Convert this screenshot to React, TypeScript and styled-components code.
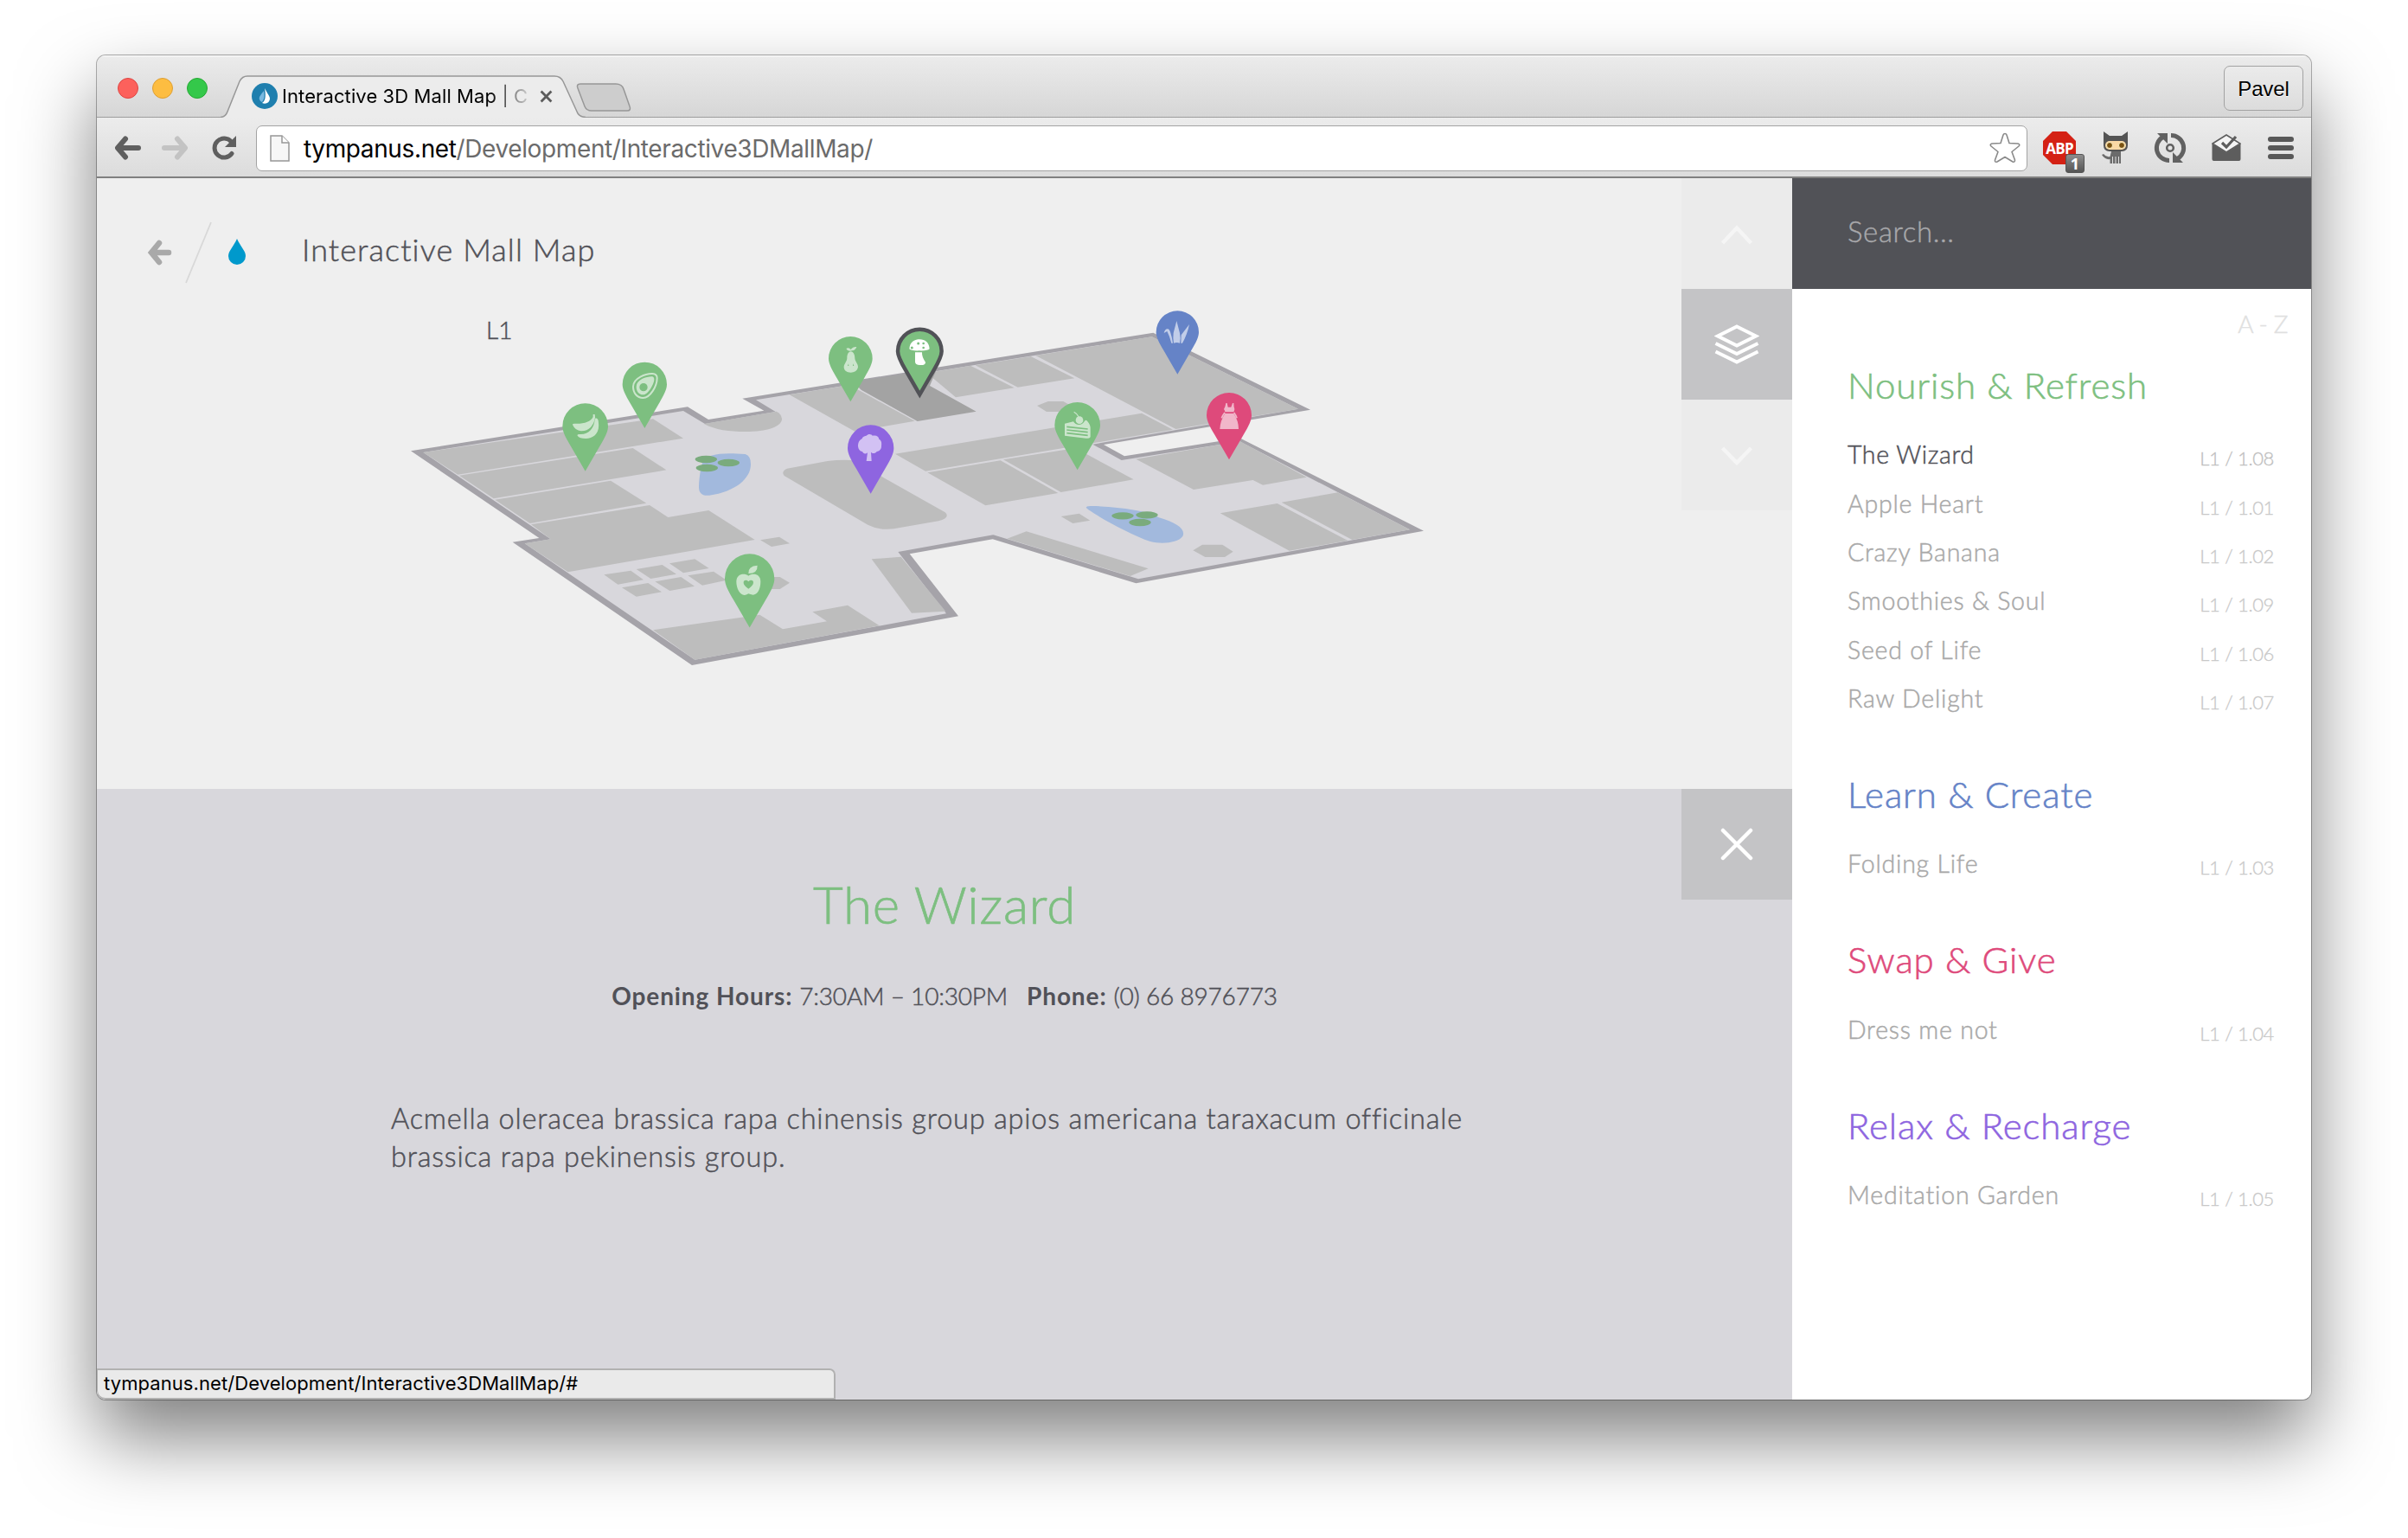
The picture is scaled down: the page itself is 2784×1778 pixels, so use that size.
import React from "react";
import styled, { createGlobalStyle } from "styled-components";

const SANS = `Lato, "Liberation Sans", sans-serif`;
const UI = `Inter, Roboto, "Liberation Sans", sans-serif`;

const colors = {
  ink: "#515158",
  green: "#7dbf80",
  blue: "#6583c7",
  pink: "#de4a7b",
  purple: "#8e65e0",
  room: "#bdbdbd",
  floor: "#d8d7dc",
  wall: "#a5a3a9",
};

const GlobalStyle = createGlobalStyle`
  *, *::before, *::after { box-sizing: border-box; }
  html, body { margin: 0; background: #fff; }
  body { font-family: ${SANS}; font-weight: 300; color: ${colors.ink}; overflow: hidden; }
  h1, h2, h3, p, ul { margin: 0; padding: 0; font-weight: 300; list-style: none; }
  svg { display: block; flex: none; }
`;

const Desktop = styled.div`
  width: 2784px;
  height: 1778px;
  padding: 64px 112px 160px;
  overflow: hidden;
`;

const Window = styled.div`
  width: 2560px;
  height: 1554px;
  display: flex;
  flex-direction: column;
  border-radius: 10px;
  overflow: hidden;
  background: #efefef;
  box-shadow: 0 0 0 1px rgba(0, 0, 0, 0.3), 0 44px 88px rgba(0, 0, 0, 0.5);
`;

/* ---------- browser chrome ---------- */

const TitleBar = styled.div`
  height: 72px;
  flex: none;
  display: flex;
  align-items: flex-end;
  background: linear-gradient(#ebebeb, #d6d6d6);
  border-top: 2px solid #f3f3f3;
  box-shadow: inset 0 -1px 0 #9d9d9d;
`;

const Lights = styled.div`
  width: 143px;
  height: 70px;
  padding: 2px 0 0 24px;
  display: flex;
  align-items: center;
  gap: 16px;
`;

const Light = styled.span<{ $fill: string; $edge: string }>`
  width: 24px;
  height: 24px;
  border-radius: 50%;
  background: ${(p) => p.$fill};
  border: 1px solid ${(p) => p.$edge};
`;

const Tab = styled.div`
  position: relative;
  width: 424px;
  height: 49px;
  display: flex;
  align-items: center;
  padding: 0 0 1px 36px;
`;

const TabShape = styled.svg`
  position: absolute;
  left: 0;
  top: 0;
`;

const TabTitle = styled.span`
  position: relative;
  width: 292px;
  margin: 0 6px 0 5px;
  white-space: nowrap;
  font: 400 22px/30px ${UI};
  letter-spacing: 0.1px;
  color: #000;
  -webkit-mask-image: linear-gradient(90deg, #000 82%, rgba(0, 0, 0, 0.1) 98%);
  mask-image: linear-gradient(90deg, #000 82%, rgba(0, 0, 0, 0.1) 98%);
`;

const Overlay = styled.span`
  position: relative;
  display: flex;
`;

const NewTab = styled.svg`
  margin: 0 0 7px -13px;
`;

const ProfileButton = styled.button`
  width: 92px;
  height: 52px;
  margin: 0 9px 8px auto;
  padding: 2px 0 0;
  border: 1.5px solid #a2a2a2;
  border-radius: 7px;
  background: linear-gradient(#ebebeb, #dcdcdc);
  font: 400 24px/48px "Liberation Sans", Arial, sans-serif;
  letter-spacing: -0.1px;
  color: #000;
  text-shadow: 0 1px 0 #fff;
`;

const Toolbar = styled.div`
  height: 70px;
  flex: none;
  display: flex;
  align-items: center;
  padding: 2px 8px 0 20px;
  background: linear-gradient(#ececec, #dcdcdc);
  border-bottom: 2px solid #808080;
`;

const NavIcons = styled.div`
  display: flex;
  align-items: center;
  flex: none;
  width: 164px;
  gap: 24px;
  svg:last-child { margin-left: 3px; }
`;

const Omnibox = styled.div`
  width: 2048px;
  flex: none;
  height: 53px;
  display: flex;
  align-items: center;
  padding: 0 7px 0 15px;
  border: 1.5px solid #a3a3a3;
  border-radius: 7px;
  background: #fff;
`;

const Url = styled.span`
  flex: 1;
  margin-left: 16px;
  padding-top: 2px;
  font: 400 28px/40px ${UI};
  letter-spacing: -0.38px;
  color: #6b6b6b;
  b { font-weight: 400; color: #000; }
`;

const Extensions = styled.div`
  display: flex;
  flex: none;
  align-items: center;
  gap: 23.6px;
  margin-left: 14px;
`;

const AbpIcon = styled.span`
  position: relative;
  width: 48px;
  height: 50px;
  padding: 6px 0 0 4px;
`;

const AbpLabel = styled.span`
  display: block;
  width: 38px;
  height: 38px;
  background: #d42114;
  clip-path: polygon(29% 0, 71% 0, 100% 29%, 100% 71%, 71% 100%, 29% 100%, 0 71%, 0 29%);
  color: #fff;
  text-align: center;
  font: 700 17px/40px "Open Sans", "Liberation Sans", sans-serif;
  letter-spacing: -0.7px;
`;

const AbpBadge = styled.span`
  position: absolute;
  left: 30px;
  top: 32px;
  width: 22px;
  height: 22px;
  border-radius: 3px;
  background: linear-gradient(#8d8d8d, #555);
  border: 1px solid #555;
  color: #fff;
  text-align: center;
  font: 700 18px/21px "Open Sans", "Liberation Sans", sans-serif;
`;

/* ---------- page ---------- */

const Page = styled.div`
  flex: 1;
  display: flex;
  min-height: 0;
`;

const Main = styled.main`
  width: 1960px;
  display: flex;
  flex-direction: column;
`;

const MapSection = styled.section`
  height: 706px;
  display: flex;
  background: #efefef;
`;

const MapColumn = styled.div`
  width: 1832px;
  padding-top: 50px;
`;

const PageHeader = styled.header`
  display: flex;
  align-items: center;
  height: 72px;
  padding-left: 58px;
`;

const PageTitle = styled.h1`
  margin-left: 64px;
  font-size: 36px;
  line-height: 72px;
  height: 80px;
  letter-spacing: 1.1px;
  -webkit-text-stroke: 0.5px currentColor;
`;

const MapStage = styled.div`
  position: relative;
  margin: 12px 0 0 338px;
`;

const LevelLabel = styled.span`
  position: absolute;
  left: 112px;
  top: 21px;
  font-size: 28px;
  line-height: 40px;
  -webkit-text-stroke: 0.5px currentColor;
`;

const LevelNav = styled.nav`
  display: flex;
  flex-direction: column;
`;

const SquareButton = styled.button<{ $muted?: boolean }>`
  width: 128px;
  height: 128px;
  flex: none;
  padding: 0;
  border: 0;
  display: flex;
  align-items: center;
  justify-content: center;
  background: ${(p) => (p.$muted ? "#ebebeb" : "#c4c4c6")};
`;

const Detail = styled.section`
  position: relative;
  flex: 1;
  padding-top: 93px;
  background: ${colors.floor};
`;

const CloseSlot = styled.div`
  position: absolute;
  right: 0;
  top: 0;
`;

const DetailTitle = styled.h2`
  text-align: center;
  font-size: 60px;
  line-height: 80px;
  letter-spacing: 0.8px;
  color: ${colors.green};
  -webkit-text-stroke: 0.7px currentColor;
`;

const Facts = styled.p`
  margin-top: 46px;
  display: flex;
  justify-content: center;
  gap: 8px;
  font-size: 28px;
  line-height: 40px;
  letter-spacing: -0.2px;
  span { -webkit-text-stroke: 0.5px currentColor; }
`;

const FactName = styled.b<{ $gap?: boolean }>`
  font-weight: 700;
  letter-spacing: 0.9px;
  margin-left: ${(p) => (p.$gap ? 14 : 0)}px;
`;

const Description = styled.p`
  width: 1300px;
  margin: 100px 0 0 340px;
  font-size: 32.5px;
  line-height: 44px;
  letter-spacing: 0.8px;
  -webkit-text-stroke: 0.5px currentColor;
`;

const StatusBar = styled.div`
  position: absolute;
  left: 0;
  bottom: 0;
  width: 854px;
  height: 36px;
  padding-left: 7px;
  border: 2px solid #b1b1b1;
  border-left-width: 1px;
  border-radius: 0 7px 0 10px;
  background: #eaeaea;
  font: 400 22px/31px ${UI};
  letter-spacing: 0.08px;
  color: #000;
`;

/* ---------- sidebar ---------- */

const Sidebar = styled.aside`
  width: 600px;
  background: #fff;
`;

const SearchBox = styled.div`
  height: 128px;
  padding-left: 64px;
  background: #515257;
  color: #a8a8ab;
  font-size: 33px;
  line-height: 123px;
  letter-spacing: 0.6px;
  -webkit-text-stroke: 0.4px currentColor;
`;

const SortToggle = styled.div`
  padding: 25px 27px 26px 0;
  text-align: right;
  font-size: 28px;
  line-height: 30px;
  letter-spacing: -0.4px;
  color: #e0e0e0;
  -webkit-text-stroke: 0.4px currentColor;
`;

const Group = styled.section`
  margin-bottom: 52.8px;
`;

const GroupTitle = styled.h3<{ $color: string }>`
  padding-left: 64px;
  margin-bottom: 22px;
  font-size: 42px;
  line-height: 60px;
  letter-spacing: 0.9px;
  color: ${(p) => p.$color};
  -webkit-text-stroke: 0.6px currentColor;
`;

const Shop = styled.li<{ $active?: boolean }>`
  height: 56.4px;
  padding: 0 43px 0 64px;
  display: flex;
  justify-content: space-between;
  align-items: center;
  font-size: 28.5px;
  letter-spacing: ${(p) => (p.$active ? 0.6 : 0.8)}px;
  color: ${(p) => (p.$active ? colors.ink : "#a9a9a9")};
  -webkit-text-stroke: 0.5px currentColor;
`;

const ShopPlace = styled.span<{ $active?: boolean }>`
  padding-top: 9px;
  font-size: 22px;
  letter-spacing: -0.35px;
  color: ${(p) => (p.$active ? "#bebebe" : "#c8c8c8")};
  -webkit-text-stroke: 0.3px currentColor;
`;

/* ---------- map ---------- */

const rooms = [
  "118,549 915,433 1020,500 238,626",
  "243,629 845,534 961,610 362,709",
  "367,713 768,647 892,725 488,795",
  "492,799 903,732 967,774 1108,750 1268,852 620,964 470,865 560,850",
  "745,973 838,959 882,991 793,1007",
  "857,954 947,939 996,971 907,987",
  "972,934 1060,919 1109,951 1020,967",
  "807,1018 898,1002 945,1033 857,1049",
  "922,997 1012,981 1059,1013 973,1029",
  "1036,976 1125,962 1170,992 1086,1010",
  "915,1165 1285,1112 1365,1162 1518,1135 1468,1102 1590,1079 1700,1150 1060,1268",
  "1300,981 1355,981 1389,1001 1355,1023 1300,1023",
  "1287,853 1353,842 1389,865 1326,876",
  "1673,919 1775,911 1930,1100 1812,1106",
  "1388,349 1595,316 1630,334 1823,440 1615,476",
  "1865,274 2016,248 2168,325 1965,358",
  "2033,247 2225,216 2377,292 2180,323",
  "2242,213 2645,148 3153,398 2728,468 2390,290",
  "1755,554 2610,413 2718,470 2445,516 1860,614",
  "1867,619 2120,577 2320,690 2068,733",
  "2130,574 2380,534 2582,643 2330,687",
  "2247,387 2285,372 2338,372 2370,390 2335,408 2280,408",
  "2590,572 2950,510 3182,635 3030,662 2996,645 2790,678",
  "2882,760 3080,726 3325,855 3122,890",
  "3095,722 3290,688 3540,817 3340,852",
  "2330,771 2393,761 2431,785 2371,795",
  "2788,889 2820,869 2890,869 2927,893 2898,912 2830,912",
  "2143,848 2210,823 2633,952 2570,978",
];

const pads: [number, number][] = [
  [1099, 573], [1102, 603], [1177, 585], [2544, 769], [2628, 766], [2604, 792],
];

type PinProps = { x: number; y: number; r: number; color: string; active?: boolean; children: React.ReactNode };

/* The glyph is drawn in the same units as the floor, centred on the pin head. */
const Pin = ({ x, y, r, color, active, children }: PinProps) => (
  <g transform={`translate(${x} ${y})`}>
    <path
      transform={`scale(${r / 80})`}
      d="M0 158 L-51 70 C-70 38 -80 18 -80 0 A80 80 0 0 1 80 0 C80 18 70 38 51 70 Z"
      fill={color}
      stroke={active ? "#515257" : "none"}
      strokeWidth={active ? 14 : 0}
    />
    <g fill="#fff" stroke="none" opacity={active ? 1 : 0.6}>{children}</g>
  </g>
);

const MallMap = () => (
  <svg width="1230" height="440" viewBox="0 0 3690 1320">
    <path
      fill={colors.wall}
      d="M75 544 L1035 391 L1107 435 L1300 404 L1225 362 L2650 134 L3195 401 L2478 522 L2550 562 L2950 499 L3588 821 L2590 1003 L2093 850 L1805 901 L1974 1117 L1050 1287 L428 860 L520 846 Z"
    />
    <path
      fill={colors.floor}
      d="M118 549 L1020 405 L1095 450 L1340 408 L1272 367 L2645 148 L3153 398 L2440 521 L2540 576 L2950 511 L3540 817 L2598 988 L2095 835 L1765 894 L1932 1108 L1060 1268 L470 865 L560 850 Z"
    />
    {rooms.map((points) => <polygon key={points} points={points} fill={colors.room} />)}
    <path fill={colors.room} d="M1092 450 C1130 471 1180 477 1235 477 C1310 477 1363 460 1362 432 Q1360 415 1343 407 Z" />
    <path fill={colors.room} d="M1380 605 Q1358 615 1370 630 L1660 800 Q1700 820 1750 814 L1905 787 Q1948 775 1928 757 L1715 637 L1620 577 Q1570 573 1520 579 Z" />
    <polygon fill="#a3a3a3" points="1610,305 1900,258 1875,318 2036,407 1832,441 1637,332" />
    <path fill="#a2b9dd" d="M1088 580 C1105 555 1150 548 1235 555 Q1255 562 1254 590 C1254 640 1200 685 1110 698 Q1072 702 1074 665 C1075 645 1078 610 1088 580 Z" />
    <path fill="#a2b9dd" d="M2418 742 C2412 732 2450 735 2480 737 C2560 742 2640 755 2670 775 C2730 793 2764 815 2752 840 C2735 863 2680 868 2640 858 C2570 835 2440 762 2418 742 Z" />
    {pads.map(([cx, cy]) => <ellipse key={cx} cx={cx} cy={cy} rx="38" ry="12.5" fill="#7aab7d" />)}

    <Pin x={886} y={313} r={77} color={colors.green}>
      <path fill="none" stroke="#fff" strokeWidth="6" d="M-40 8 C-40 -22 5 -38 27 -37 Q43 -36 43 -22 C43 5 20 47 -6 47 C-26 47 -40 30 -40 8 Z" />
      <path fillRule="evenodd" d="M-29 8 C-28 -16 5 -27 25 -27 Q33 -26 33 -17 C32 0 12 36 -6 36 C-20 36 -29 24 -29 8 Z M10 10 A14 14 0 1 0 -18 10 A14 14 0 1 0 10 10 Z" />
    </Pin>
    <Pin x={680} y={458} r={79} color={colors.green}>
      <path d="M-44 -5 Q-45 -9 -37 -9 C-8 -7 20 -15 27 -32 L27 -41 L33 -41 L34 -30 C30 -3 12 18 -15 17 Q-35 15 -44 -5 Z" />
      <path d="M36 -28 Q46 -28 46 -10 C50 24 28 43 2 43 Q-20 43 -27 33 Q-29 28 -20 28 C12 30 30 8 33 -22 Z" />
    </Pin>
    <Pin x={1600} y={223} r={76} color={colors.green}>
      <path fillRule="evenodd" d="M-12 0 C-13 -32 15 -32 15 0 C16 12 26 18 26 30 C24 44 12 49 1 49 C-12 49 -23 43 -23 30 C-22 18 -13 12 -12 0 Z M-7 18 L-10 26 L-6 26 Z M9 18 L8 26 L12 26 Z" />
      <path d="M-15 -34 Q-6 -40 1 -31 Q8 -41 21 -40 Q17 -28 6 -27 L-1 -26 Q-11 -25 -15 -34 Z" />
    </Pin>
    <Pin x={1840} y={198} r={76} color={colors.green} active>
      <path d="M-36 -8 C-34 -34 -16 -41 0 -41 C18 -41 33 -30 34 -8 Q28 -1 -2 -2 Q-30 -1 -36 -8 Z M-16 4 L8 4 Q7 20 20 38 Q20 48 5 48 Q-15 50 -16 37 Z" />
      <g fill={colors.green}>
        <circle cx="-5" cy="-27" r="4.500" /><circle cx="13" cy="-27" r="4" />
        <circle cx="-27" cy="-12" r="4.500" /><circle cx="13" cy="-12" r="4" />
      </g>
    </Pin>
    <Pin x={1670} y={534} r={80} color={colors.purple}>
      <path d="M-44 -6 C-45 -22 -36 -30 -30 -32 C-28 -42 -18 -42 -15 -43 C-8 -51 4 -48 6 -43 C20 -46 28 -40 29 -31 C38 -26 38 -18 37 -8 C38 4 30 10 21 12 C16 20 5 20 1 14 L3 45 L-15 45 L-11 16 C-18 22 -26 20 -29 12 C-38 11 -43 4 -44 -6 Z" />
    </Pin>
    <Pin x={1250} y={987} r={86} color={colors.green}>
      <path fillRule="evenodd" d="M-4 -10 C10 -20 38 -18 38 10 C38 38 26 56 12 56 Q2 54 -4 52 Q-12 57 -18 57 C-34 56 -46 34 -46 10 C-45 -18 -18 -20 -4 -10 Z M-4 35 C26 16 10 -4 -4 10 C-18 -4 -34 16 -4 35 Z" />
      <path d="M-4 -18 Q-6 -44 27 -46 Q28 -18 -4 -18 Z" />
    </Pin>
    <Pin x={2387} y={454} r={79} color={colors.green}>
      <path d="M-44 -5 L-14 -12 A22 22 0 0 0 24 -12 Q28 -20 34 -14 Q46 0 45 12 L45 42 Q40 48 30 46 L-44 37 Z" />
      <circle cx="7" cy="-17" r="13" />
      <path d="M4 -29 Q0 -38 -12 -45" fill="none" stroke="#fff" strokeWidth="3.5" />
      <path d="M-37 6 L36 14 M-37 17 L36 25 M-37 28 L36 36" fill="none" stroke={colors.green} strokeWidth="5" />
    </Pin>
    <Pin x={2734} y={132} r={74} color={colors.blue}>
      <path d="M-47 3 Q-43 -14 -32 -11 Q-24 -10 -16 38 L-21 38 Q-27 14 -36 -3 Z M-14 3 L-3 -39 L8 3 Q12 20 8 38 Q-2 34 -13 38 Q-16 20 -14 3 Z M13 10 L41 -27 Q34 8 17 38 L12 38 Z" />
    </Pin>
    <Pin x={2913} y={420} r={78} color={colors.pink}>
      <path d="M-11 -42 L-7 -42 L-4 -28 L7 -28 L12 -42 L16 -42 Q16 -28 19 -21 Q17 -12 16 -11 L-14 -11 Q-14 -16 -18 -21 Q-13 -28 -11 -42 Z M-14 -6 L16 -6 Q33 20 33 48 L-32 48 Q-31 20 -14 -6 Z" />
      <path d="M-15 -9 Q-22 0 -26 10 M17 -9 Q24 0 27 10" fill="none" stroke="#fff" strokeWidth="5" />
    </Pin>
  </svg>
);

/* ---------- data ---------- */

const groups = [
  {
    title: "Nourish & Refresh", color: colors.green,
    shops: [["The Wizard", "1.08"], ["Apple Heart", "1.01"], ["Crazy Banana", "1.02"], ["Smoothies & Soul", "1.09"], ["Seed of Life", "1.06"], ["Raw Delight", "1.07"]],
  },
  { title: "Learn & Create", color: colors.blue, shops: [["Folding Life", "1.03"]] },
  { title: "Swap & Give", color: colors.pink, shops: [["Dress me not", "1.04"]] },
  { title: "Relax & Recharge", color: colors.purple, shops: [["Meditation Garden", "1.05"]] },
];

const Arrow = ({ flip, color }: { flip?: boolean; color: string }) => (
  <svg width="31" height="28" viewBox="0 0 31 28" fill="none" stroke={color} strokeWidth="6" strokeLinecap="round">
    <path transform={flip ? "translate(31 0) scale(-1 1)" : undefined} d="M13 3.5 L4 14 L13 24.5 M5 14 H28" strokeLinejoin="round" />
  </svg>
);

const Chrome = () => (
  <>
    <TitleBar>
      <Lights>
        <Light $fill="#fc615c" $edge="#de4643" />
        <Light $fill="#fdbd41" $edge="#dd9f34" />
        <Light $fill="#34c84a" $edge="#26a934" />
      </Lights>
      <Tab>
        <TabShape width="424" height="49" viewBox="0 0 424 49">
          <path d="M0 49 Q6 48 8 42 L22 7 Q25 1 31 1 H386 Q393 1 396 7 L412 42 Q414 48 422 49 Z" fill="#ececec" />
          <path d="M0 48.5 Q6 48 8 42 L22 7 Q25 1 31 1 H386 Q393 1 396 7 L412 42 Q414 48 422 48.5" fill="none" stroke="#979797" strokeWidth="1.5" />
        </TabShape>
        <Overlay>
          <svg width="30" height="30" viewBox="0 0 30 30">
            <circle cx="15" cy="15" r="15" fill="#1f7fae" />
            <path d="M15 6 C18 12 21 15 21 18 A6 6 0 0 1 12 23 C17 20 16 12 15 6 Z" fill="#fff" />
            <path d="M14 9 C11 13 8 16 9 19 Q10 22 12 22 C15 18 15 14 14 9 Z" fill="#79b9e0" />
          </svg>
        </Overlay>
        <TabTitle>Interactive 3D Mall Map | C</TabTitle>
        <Overlay>
          <svg width="15" height="15" viewBox="0 0 14 14"><path d="M1.5 1.5 L12.5 12.5 M12.5 1.5 L1.5 12.5" stroke="#5c5c5c" strokeWidth="2.600" /></svg>
        </Overlay>
      </Tab>
      <NewTab width="64" height="33" viewBox="0 0 64 33">
        <path d="M5 1 H46 Q53 1 55 7 L62 27 Q64 32 59 32 H18 Q12 32 10 27 L2 6 Q0 1 5 1 Z" fill="#cdcdcd" stroke="#979797" strokeWidth="1.5" />
      </NewTab>
      <ProfileButton>Pavel</ProfileButton>
    </TitleBar>
    <Toolbar>
      <NavIcons>
        <Arrow color="#5f5f5f" />
        <Arrow flip color="#c3c3c3" />
        <svg width="30" height="28" viewBox="0 0 30 28">
          <path d="M23 20.5 A11 11 0 1 1 22.5 7" fill="none" stroke="#5f5f5f" strokeWidth="5" strokeLinecap="round" />
          <path d="M28 0 V13 H15 Z" fill="#5f5f5f" />
        </svg>
      </NavIcons>
      <Omnibox>
        <svg width="23" height="31" viewBox="0 0 23 31">
          <path d="M1 1 H14 L22 9 V30 H1 Z" fill="#f7f7f7" stroke="#979797" strokeWidth="1.5" />
          <path d="M14 1 V9 H22" fill="#fff" stroke="#979797" strokeWidth="1.5" />
        </svg>
        <Url><b>tympanus.net</b>/Development/Interactive3DMallMap/</Url>
        <svg width="36" height="36" viewBox="0 0 36 36">
          <path d="M18 1.5 Q19.5 1.5 20 3 L23 12.5 L33 13 Q36 14 34 16 L26 22.5 L29.5 32 Q29.5 35 27 34 L18 28.5 L9 34 Q6 35 6.5 32 L10 22.5 L2 16 Q0 14 3 13 L13 12.5 L16 3 Q16.500 1.5 18 1.500 Z" fill="#fff" stroke="#8a8a8a" strokeWidth="1.6" strokeLinejoin="round" />
        </svg>
      </Omnibox>
      <Extensions>
        <AbpIcon>
          <AbpLabel>ABP</AbpLabel>
          <AbpBadge>1</AbpBadge>
        </AbpIcon>
        <svg width="32" height="40" viewBox="0 0 32 40">
          <path d="M2 1 L9 6 H23 L30 1 V17 Q30 24 23 24 H9 Q2 24 2 17 Z" fill="#545454" />
          <path d="M11 24 H22 V38 H20 V30 H19 V38 H16.500 V30 H15.500 V38 H13 V30 H12 V38 H9.500 V33 Q4 34 0 28 L2 27 Q5 31 9.500 30 Z" fill="#6b6b6b" />
          <rect x="4" y="12" width="24" height="10" rx="5" fill="#fbd9a5" />
          <circle cx="9" cy="17" r="3.500" fill="#7a5212" stroke="#fff3c4" />
          <circle cx="23" cy="17" r="3.500" fill="#7a5212" stroke="#fff3c4" />
        </svg>
        <svg width="48" height="36" viewBox="0 0 48 36">
          <g transform="translate(7 0)" fill="none" stroke="#616161" strokeWidth="5">
            <path d="M18 3.500 A14.500 14.500 0 0 1 25.500 30.500" />
            <path d="M16 32.500 A14.500 14.500 0 0 1 8.500 5.500" />
            <circle cx="17" cy="18" r="3.800" strokeWidth="2.600" />
            <path d="M2 1 H14 V13 Z M20 23 V35 H32 Z" fill="#616161" stroke="none" />
          </g>
        </svg>
        <svg width="34" height="34" viewBox="0 0 34 34">
          <path d="M1 12 L17 2 L33 12 L17 22 Z" fill="#f4f4f4" stroke="#5d5d5d" strokeWidth="1.500" />
          <path d="M0.500 12 L17 22.500 L33.500 12 V30 Q33.500 32 31.500 32 H2.500 Q0.500 32 0.500 30 Z" fill="#5d5d5d" />
          <path d="M12 11 L17 16 L28 4" fill="none" stroke="#5d5d5d" strokeWidth="3.200" />
        </svg>
        <svg width="46" height="28" viewBox="0 0 46 28">
          <path d="M11 4 H35 M11 14 H35 M11 24 H35" stroke="#585858" strokeWidth="6" strokeLinecap="round" />
        </svg>
      </Extensions>
    </Toolbar>
  </>
);

export default function App() {
  return (
    <>
      <GlobalStyle />
      <Desktop>
        <Window>
          <Chrome />
          <Page>
            <Main>
              <MapSection>
                <MapColumn>
                  <PageHeader>
                    <svg width="115" height="72" viewBox="0 0 115 72">
                      <path d="M14 25 L5 36 L14 47 M6 36 H25" fill="none" stroke="#a9a9a9" strokeWidth="6.500" strokeLinecap="round" />
                      <path d="M74 1 L45 71" stroke="#d8d8d8" strokeWidth="1.800" />
                      <path d="M104 20 C108 29 114 34 114 40 A10 10 0 0 1 94 40 C94 34 100 29 104 20 Z" fill="#0099cc" />
                    </svg>
                    <PageTitle>Interactive Mall Map</PageTitle>
                  </PageHeader>
                  <MapStage>
                    <MallMap />
                    <LevelLabel>L1</LevelLabel>
                  </MapStage>
                </MapColumn>
                <LevelNav>
                  <SquareButton $muted aria-label="Up">
                    <svg width="38" height="26" viewBox="0 0 38 26"><path d="M2.500 24 L19 6.500 L35.500 24" fill="none" stroke="#f5f5f5" strokeWidth="4.500" /></svg>
                  </SquareButton>
                  <SquareButton aria-label="All levels">
                    <svg width="52" height="46" viewBox="0 0 52 46" fill="none" stroke="#fff" strokeWidth="4">
                      <path d="M26 2.500 L48 13.500 L26 24.500 L4 13.500 Z" />
                      <path d="M1.500 22 L26 34 L50.500 22 M1.500 31.500 L26 43.500 L50.500 31.500" />
                    </svg>
                  </SquareButton>
                  <SquareButton $muted aria-label="Down">
                    <svg width="38" height="26" viewBox="0 0 38 26"><path d="M2.500 5 L19 22 L35.500 5" fill="none" stroke="#f5f5f5" strokeWidth="4.500" /></svg>
                  </SquareButton>
                </LevelNav>
              </MapSection>
              <Detail>
                <DetailTitle>The Wizard</DetailTitle>
                <Facts>
                  <FactName>Opening Hours:</FactName>
                  <span>7:30AM – 10:30PM</span>
                  <FactName $gap>Phone:</FactName>
                  <span>(0) 66 8976773</span>
                </Facts>
                <Description>
                  Acmella oleracea brassica rapa chinensis group apios americana taraxacum officinale brassica rapa pekinensis group.
                </Description>
                <CloseSlot>
                  <SquareButton aria-label="Close">
                    <svg width="38" height="38" viewBox="0 0 38 38"><path d="M3 3 L35 35 M35 3 L3 35" stroke="#fff" strokeWidth="4.500" strokeLinecap="round" /></svg>
                  </SquareButton>
                </CloseSlot>
                <StatusBar>tympanus.net/Development/Interactive3DMallMap/#</StatusBar>
              </Detail>
            </Main>
            <Sidebar>
              <SearchBox>Search...</SearchBox>
              <SortToggle>A - Z</SortToggle>
              {groups.map((group) => (
                <Group key={group.title}>
                  <GroupTitle $color={group.color}>{group.title}</GroupTitle>
                  <ul>
                    {group.shops.map(([name, place]) => (
                      <Shop key={name} $active={name === "The Wizard"}>
                        {name}
                        <ShopPlace $active={name === "The Wizard"}>L1 / {place}</ShopPlace>
                      </Shop>
                    ))}
                  </ul>
                </Group>
              ))}
            </Sidebar>
          </Page>
        </Window>
      </Desktop>
    </>
  );
}
